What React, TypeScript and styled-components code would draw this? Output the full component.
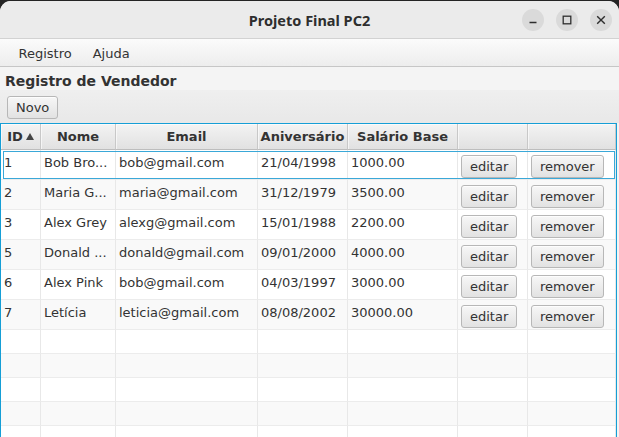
import React from 'react';
import styled, { createGlobalStyle } from 'styled-components';

const GlobalStyle = createGlobalStyle`
  html, body { margin: 0; padding: 0; background: #242424; }
  body { font-family: "DejaVu Sans", sans-serif; font-size: 13px; color: #333; }
  * { box-sizing: border-box; }
`;

const Window = styled.div`
  margin-top: 1px;
  width: 619px;
  height: 436px;
  background: #f4f4f4;
  border-radius: 11px 11px 0 0;
  overflow: hidden;
  display: flex;
  flex-direction: column;
`;

const TitleBar = styled.div`
  flex: none;
  height: 38px;
  background: #ebebeb;
  border-bottom: 1px solid #d2d2d2;
  display: grid;
  grid-template-columns: 1fr auto 1fr;
  align-items: center;
`;

const Title = styled.div`
  grid-column: 2;
  font-family: "Noto Sans", "DejaVu Sans", sans-serif;
  font-weight: 700;
  font-size: 14.5px;
  color: #2e2e2e;
`;

const Controls = styled.div`
  grid-column: 3;
  justify-self: end;
  display: flex;
  gap: 12px;
  padding-right: 7px;
`;

const CtlButton = styled.div`
  width: 22px;
  height: 22px;
  border-radius: 50%;
  background: #dadada;
  display: flex;
  align-items: center;
  justify-content: center;
  color: #2e2e2e;
`;

const MenuBar = styled.div`
  flex: none;
  height: 28px;
  display: flex;
  align-items: center;
  padding: 1px 0 0 8px;
  background: linear-gradient(#fbfbfb, #ededed);
  border-bottom: 1px solid #c6c6c6;
`;

const MenuItem = styled.div`
  padding: 0 10.5px;
  line-height: 15px;
  color: #333;
`;

const Heading = styled.div`
  flex: none;
  height: 23px;
  padding: 6px 0 0 5px;
  font-weight: 700;
  font-size: 14px;
  color: #333;
  background: #f4f4f4;
`;

const ToolBar = styled.div`
  flex: none;
  height: 33px;
  padding: 6px 0 0 7px;
  background: linear-gradient(#efefef, #e8e8e8);
`;

const Button = styled.button`
  font-family: inherit;
  font-size: 13px;
  color: #333;
  height: 23px;
  padding: 0 8px;
  line-height: 21px;
  border: 1px solid #b7b7b7;
  border-radius: 3px;
  background: linear-gradient(#f7f7f7, #e2e2e2);
  box-shadow: inset 0 1px 0 rgba(255, 255, 255, 0.8);
  cursor: default;
`;

const Table = styled.div`
  flex: 1;
  min-height: 0;
  margin-right: 2px;
  border: 1px solid #159ed6;
  border-bottom: none;
  background: #fff;
  overflow: hidden;
`;

const COLS = '40px 75px 142px 90px 110px 70px 88px';

const HeaderRow = styled.div`
  display: grid;
  grid-template-columns: ${COLS};
  height: 26px;
`;

const HeaderCell = styled.div`
  display: flex;
  align-items: center;
  justify-content: center;
  gap: 3px;
  font-weight: 700;
  color: #333;
  background: linear-gradient(#f3f3f3, #e1e1e1);
  border-right: 1px solid #c8c8c8;
  border-bottom: 1px solid #bdbdbd;
  box-shadow: inset 1px 1px 0 rgba(255, 255, 255, 0.6);
`;

const Row = styled.div<{ $odd: boolean; $h: number; $focused?: boolean }>`
  position: relative;
  display: grid;
  grid-template-columns: ${COLS};
  height: ${(p) => p.$h}px;
  background: ${(p) => (p.$odd ? '#f9f9f9' : '#ffffff')};
  &::after {
    content: '';
    display: ${(p) => (p.$focused ? 'block' : 'none')};
    position: absolute;
    left: 2px;
    right: 1px;
    top: 1px;
    bottom: 1px;
    border: 1px solid #3aa8d8;
    pointer-events: none;
  }
`;

const Cell = styled.div`
  padding: 5px 0 0 3px;
  line-height: 15px;
  white-space: nowrap;
  overflow: hidden;
  color: #333;
  border-right: 1px solid #e8e8e8;
  border-bottom: 1px solid #ececec;
`;

const ButtonCell = styled.div`
  padding: 5px 0 0 3px;
  border-right: 1px solid #e8e8e8;
  border-bottom: 1px solid #ececec;
`;

type Vendedor = { id: string; nome: string; email: string; aniv: string; sal: string };

const data: Vendedor[] = [
  { id: '1', nome: 'Bob Bro...', email: 'bob@gmail.com', aniv: '21/04/1998', sal: '1000.00' },
  { id: '2', nome: 'Maria G...', email: 'maria@gmail.com', aniv: '31/12/1979', sal: '3500.00' },
  { id: '3', nome: 'Alex Grey', email: 'alexg@gmail.com', aniv: '15/01/1988', sal: '2200.00' },
  { id: '5', nome: 'Donald ...', email: 'donald@gmail.com', aniv: '09/01/2000', sal: '4000.00' },
  { id: '6', nome: 'Alex Pink', email: 'bob@gmail.com', aniv: '04/03/1997', sal: '3000.00' },
  { id: '7', nome: 'Letícia', email: 'leticia@gmail.com', aniv: '08/08/2002', sal: '30000.00' },
];

const SortArrow = () => (
  <svg width="8" height="7" viewBox="0 0 8 7">
    <path d="M4 0 L8 7 L0 7 Z" fill="#444" />
  </svg>
);

export default function App() {
  const empty = Array.from({ length: 6 }, (_, i) => data.length + i);
  return (
    <>
      <GlobalStyle />
      <Window>
        <TitleBar>
          <Title>Projeto Final PC2</Title>
          <Controls>
            <CtlButton>
              <svg width="10" height="10" viewBox="0 0 10 10">
                <path d="M1.5 7.5 H8.5" stroke="currentColor" strokeWidth="1.4" />
              </svg>
            </CtlButton>
            <CtlButton>
              <svg width="10" height="10" viewBox="0 0 10 10">
                <rect x="1.2" y="1.2" width="7.6" height="7.6" fill="none" stroke="currentColor" strokeWidth="1.3" />
              </svg>
            </CtlButton>
            <CtlButton>
              <svg width="10" height="10" viewBox="0 0 10 10">
                <path d="M1.2 1.2 L8.8 8.8 M8.8 1.2 L1.2 8.8" stroke="currentColor" strokeWidth="1.4" />
              </svg>
            </CtlButton>
          </Controls>
        </TitleBar>
        <MenuBar>
          <MenuItem>Registro</MenuItem>
          <MenuItem>Ajuda</MenuItem>
        </MenuBar>
        <Heading>Registro de Vendedor</Heading>
        <ToolBar>
          <Button>Novo</Button>
        </ToolBar>
        <Table>
          <HeaderRow>
            <HeaderCell>
              ID
              <SortArrow />
            </HeaderCell>
            <HeaderCell>Nome</HeaderCell>
            <HeaderCell>Email</HeaderCell>
            <HeaderCell>Aniversário</HeaderCell>
            <HeaderCell>Salário Base</HeaderCell>
            <HeaderCell />
            <HeaderCell />
          </HeaderRow>
          {data.map((v, i) => (
            <Row key={v.id} $odd={i % 2 === 1} $h={30} $focused={i === 0}>
              <Cell>{v.id}</Cell>
              <Cell>{v.nome}</Cell>
              <Cell>{v.email}</Cell>
              <Cell>{v.aniv}</Cell>
              <Cell>{v.sal}</Cell>
              <ButtonCell>
                <Button>editar</Button>
              </ButtonCell>
              <ButtonCell>
                <Button>remover</Button>
              </ButtonCell>
            </Row>
          ))}
          {empty.map((i) => (
            <Row key={i} $odd={i % 2 === 1} $h={24}>
              <Cell />
              <Cell />
              <Cell />
              <Cell />
              <Cell />
              <Cell />
              <Cell />
            </Row>
          ))}
        </Table>
      </Window>
    </>
  );
}
